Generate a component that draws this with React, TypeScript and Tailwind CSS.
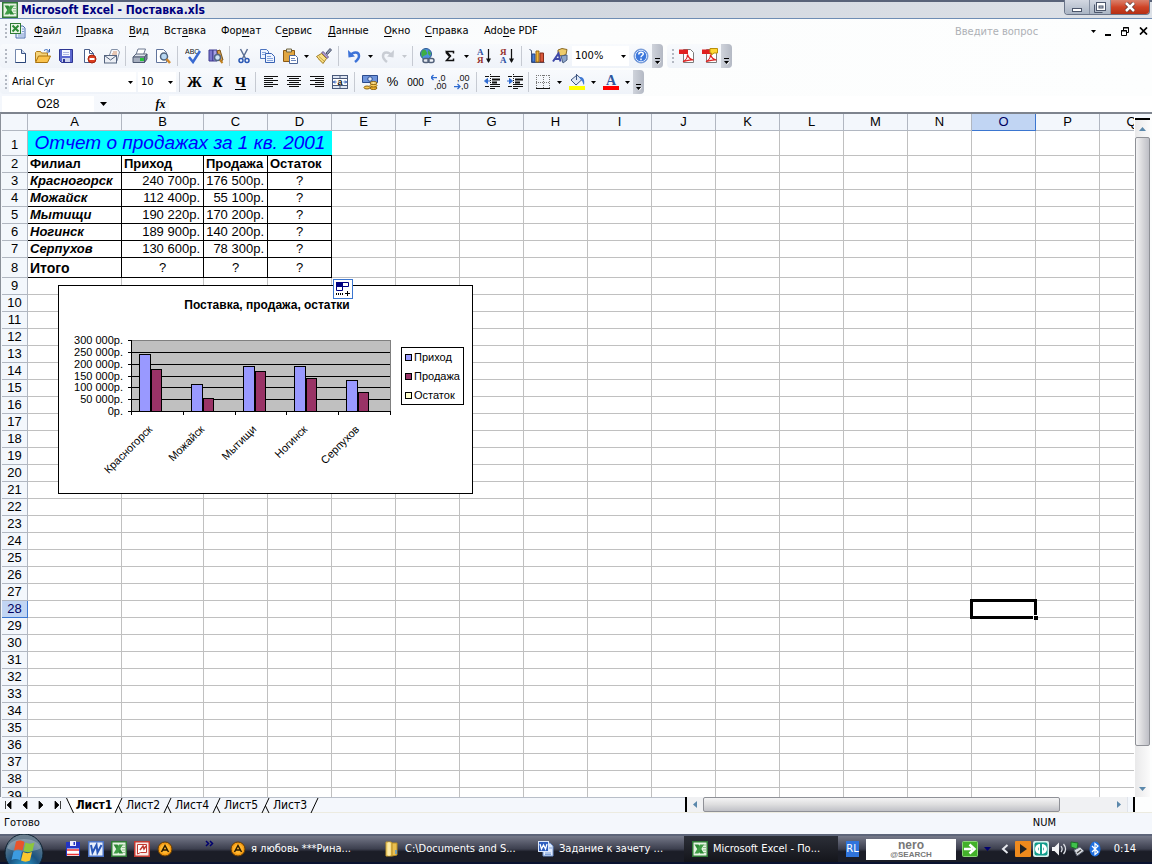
import type { ReactNode } from "react";

const UI = "font-['DejaVu_Sans_Condensed','DejaVu_Sans',sans-serif]";
const ARIAL = "font-['Liberation_Sans',Arial,sans-serif]";

function Icon({ children, size = 16 }: { children: ReactNode; size?: number }) {
  return (
    <svg width={size} height={size} viewBox="0 0 16 16" fill="none" aria-hidden="true" className="shrink-0">
      {children}
    </svg>
  );
}

/* ---------- icons ---------- */

const ExcelIcon = ({ size = 16 }: { size?: number }) => (
  <Icon size={size}>
    <rect x=".75" y=".75" width="14.5" height="14.5" fill="#e6f3e2" stroke="#2f7a36" strokeWidth="1.5" />
    <path d="M11 4h3M11 6.500h3M11 9h3M11 11.500h3" stroke="#8fc08b" />
    <path d="M2.500 3.500h4l5.500 9h-4z" fill="#2c8a35" />
    <path d="M8 3.500h4l-5.500 9h-4z" fill="#3f9c45" />
  </Icon>
);

const WordIcon = () => (
  <Icon>
    <rect x=".75" y=".75" width="14.5" height="14.5" fill="#e9f0fc" stroke="#4a72c4" strokeWidth="1.5" />
    <path d="M3 4l1.500 7.500L8.500 4l1 7.500L13.500 4" stroke="#2855b5" strokeWidth="2" />
  </Icon>
);

const PptIcon = () => (
  <Icon>
    <rect x=".75" y=".75" width="14.5" height="14.5" fill="#fbe9e6" stroke="#c23a32" strokeWidth="1.5" />
    <path d="M3.500 3.500h9v8h-6l-3 1.500z" fill="#fff" stroke="#c23a32" />
    <path d="M6 9l3-4 1 3 2-3" stroke="#c23a32" strokeWidth="1.5" />
  </Icon>
);

const AmpIcon = () => (
  <Icon>
    <circle cx="8" cy="8" r="7" fill="#f59a12" stroke="#5e3a05" />
    <circle cx="8" cy="8" r="5" fill="#ffb62e" />
    <path d="M4.500 11L8 4.500l3.500 6.500M6 9h4" stroke="#2a1a00" strokeWidth="1.5" />
  </Icon>
);

const WorkbookIcon = () => (
  <Icon>
    <path d="M6 3h7l2 2v10H6z" fill="#e8f0fb" stroke="#4d6fae" />
    <path d="M12 6h2M12 8.500h2M8 11h6M8 13h6" stroke="#7f9bd0" />
    <rect x=".5" y=".5" width="10" height="10" fill="#eaf6e7" stroke="#2f7a36" />
    <path d="M2.500 2.500l6 6M8.500 2.500l-6 6" stroke="#2c8a35" strokeWidth="2" />
  </Icon>
);

const NewIcon = () => (
  <Icon>
    <path d="M3.500 1.500h6l4 4v9h-10z" fill="#fff" stroke="#7488ad" />
    <path d="M9.500 1.500v4h4" fill="#cddaf0" stroke="#3d5687" />
    <path d="M13.500 5.500v9h-10" stroke="#2b4679" />
  </Icon>
);

const OpenIcon = () => (
  <Icon>
    <path d="M.5 13.500v-9l1-1h4l1 1.500h6v3" fill="#f6d47a" stroke="#b17c1b" />
    <path d="M.5 14.500l3-6.500h12l-3 6.500z" fill="#fbc34d" stroke="#a8720f" />
    <path d="M9 2.500c2-1.500 4-1 5 1M14.500 1v3h-3" stroke="#3463b5" />
  </Icon>
);

const SaveIcon = () => (
  <Icon>
    <path d="M1.500 1.500h13v13h-11l-2-2z" fill="#5b67cf" stroke="#2d3592" />
    <rect x="4" y="2" width="8" height="6" fill="#f4f6ff" />
    <path d="M5 4.500h6M5 6.500h6" stroke="#aeb6e2" />
    <path d="M4 10h8v4H4z" fill="#cdd3ee" />
    <path d="M5 11h2v3H5z" fill="#2d3592" />
  </Icon>
);

const PermissionIcon = () => (
  <Icon>
    <path d="M3.500 1.500h5l4 4v9h-9z" fill="#fff" stroke="#4a5f8c" />
    <path d="M8.500 1.500v4h4" stroke="#4a5f8c" />
    <circle cx="11" cy="11" r="4" fill="#dc3d1f" stroke="#a3230f" />
    <path d="M8.500 11h5" stroke="#fff" strokeWidth="2" />
  </Icon>
);

const MailIcon = () => (
  <Icon>
    <path d="M5.500 7l2-5.500h6l2 2.500-2.500 9z" fill="#f7f8fb" stroke="#8592a8" />
    <path d="M9 4h4M8 6h5" stroke="#d5926a" />
    <rect x=".5" y="7.500" width="12" height="7.500" fill="#eceff5" stroke="#55647f" />
    <path d="M.5 7.500l6 4.500 6-4.500" stroke="#55647f" />
  </Icon>
);

const PrintIcon = () => (
  <Icon>
    <path d="M4 6.500l2-5.500h7.500l-2 5.500z" fill="#fff" stroke="#6c7890" />
    <path d="M1 9l3-3h11l-2.500 3z" fill="#dde2ea" stroke="#5d687f" />
    <path d="M1 9h11.500v5.500H1z" fill="#a6afbf" stroke="#4d5870" />
    <path d="M12.500 9L15 6v5l-2.500 3.500z" fill="#78839a" stroke="#4d5870" />
    <path d="M8 11.500h4" stroke="#26c53a" strokeWidth="3" />
  </Icon>
);

const PreviewIcon = () => (
  <Icon>
    <path d="M1.500 1.500h7l3 3v10h-10z" fill="#fff" stroke="#60749c" />
    <circle cx="9" cy="8.5" r="3.5" fill="#b9d8f2" stroke="#51657f" strokeWidth="1.5" />
    <path d="M11.500 11l3.500 4" stroke="#d0882b" strokeWidth="2.5" />
  </Icon>
);

const SpellIcon = () => (
  <Icon>
    <text x="0" y="6" fontSize="7" fill="#111" fontFamily="Liberation Sans">ABC</text>
    <path d="M4 9l4 5 7-11" stroke="#3869d1" strokeWidth="2.5" />
  </Icon>
);

const ResearchIcon = () => (
  <Icon>
    <path d="M1 2h4v11H1z" fill="#7b76cc" stroke="#3f3a8e" />
    <path d="M5 2h4v11H5z" fill="#a9a4e5" stroke="#3f3a8e" />
    <path d="M9 3l3-1 3 10-3 1z" fill="#dca04c" stroke="#7a5317" />
    <circle cx="9.5" cy="9.5" r="3" fill="#cfe4f6" stroke="#526682" strokeWidth="1.5" />
    <path d="M12 12l2.500 3" stroke="#c0801f" strokeWidth="2" />
  </Icon>
);

const CutIcon = () => (
  <Icon>
    <path d="M4.500 1l5 9.500M11.500 1l-5 9.500" stroke="#5b6f94" strokeWidth="1.5" />
    <circle cx="5" cy="12.5" r="2" stroke="#2957b4" strokeWidth="1.5" />
    <circle cx="11" cy="12.5" r="2" stroke="#2957b4" strokeWidth="1.5" />
  </Icon>
);

const CopyIcon = () => (
  <Icon>
    <path d="M1.500 1.500h6l2 2v7h-8z" fill="#eef4ff" stroke="#4d74bf" />
    <path d="M3 4.500h4M3 6.500h4" stroke="#86a5dc" />
    <path d="M6.500 5.500h6l3 3v6h-9z" fill="#eef4ff" stroke="#3661b3" />
    <path d="M8 8.500h4M8 10.500h6M8 12.500h6" stroke="#86a5dc" />
  </Icon>
);

const PasteIcon = () => (
  <Icon>
    <path d="M1.500 2.500h11v11h-11z" fill="#e1a641" stroke="#8c5a14" />
    <path d="M4.500 1h5v3h-5z" fill="#e8e3d2" stroke="#6f6441" />
    <path d="M7.500 7.500h6l2 2v6h-8z" fill="#fff" stroke="#4d6697" />
    <path d="M9 10.500h4M9 12.500h5" stroke="#6c86bb" />
  </Icon>
);

const BrushIcon = () => (
  <Icon>
    <path d="M10 5l4-4.500 1.500 1.500-4 4.500z" fill="#8c96ae" stroke="#4d5670" />
    <path d="M7 3.500l5.500 5.500-1.500 1.500L5.500 5z" fill="#b8a4d4" stroke="#5d4c82" />
    <path d="M5.500 5.500L.5 8.500 7 15.500l3.500-5z" fill="#f7df86" stroke="#a07a22" />
    <path d="M3 8.500l5 4.500M2 10.500l4 3.500" stroke="#c9a23d" />
  </Icon>
);

const UndoIcon = ({ muted = false }: { muted?: boolean }) => (
  <Icon>
    <g transform={muted ? "matrix(-1 0 0 1 16 0)" : undefined}>
      <path
        d="M4.500 7.500c2.500-4 8.500-4 8.500.5 0 2.500-1.500 4-4 6"
        stroke={muted ? "#c9cdd4" : "#3d73d8"}
        strokeWidth="2.5"
      />
      <path d="M2 2l.5 7.500 6.500-1z" fill={muted ? "#c9cdd4" : "#3d73d8"} />
    </g>
  </Icon>
);

const LinkIcon = () => (
  <Icon>
    <circle cx="7" cy="6" r="5.5" fill="#4d8fdc" stroke="#2b5694" />
    <path d="M3 3c2-2 4-1 4 0s2 1 1 3-4 1-4 3-3-3-1-6zM9 2l3 3-1 3-2-2z" fill="#3fae46" />
    <rect x="4" y="10.5" width="6" height="4" rx="2" fill="#e5e9ef" stroke="#52617a" strokeWidth="1.5" />
    <rect x="9" y="10.5" width="6" height="4" rx="2" fill="none" stroke="#52617a" strokeWidth="1.5" />
  </Icon>
);

const SumIcon = () => (
  <Icon>
    <path d="M11.500 5.500V3.500h-7l4 4.500-4 4.500h7v-2" stroke="#111" strokeWidth="1.5" />
    <path d="M4 4l4 4.500" stroke="#111" strokeWidth="2" />
  </Icon>
);

const SortIcon = ({ down = true }: { down?: boolean }) => (
  <Icon>
    <text x="1" y="7" fontSize="9" fontWeight="bold" fill={down ? "#2d4fa0" : "#96302c"} fontFamily="Liberation Serif">
      {down ? "А" : "Я"}
    </text>
    <text x="1" y="15" fontSize="9" fontWeight="bold" fill={down ? "#96302c" : "#2d4fa0"} fontFamily="Liberation Serif">
      {down ? "Я" : "А"}
    </text>
    <path d="M12.500 1v13" stroke="#111" strokeWidth="1.25" />
    <path d="M10 10.500h5L12.500 15z" fill="#111" />
  </Icon>
);

const ChartIcon = () => (
  <Icon>
    <path d="M.5 1.500l2 1v12h13" stroke="#4a5878" />
    <path d="M3 6h3v8H3z" fill="#4b7fd6" stroke="#23468e" />
    <path d="M7 3h3v11H7z" fill="#f3b53a" stroke="#916514" />
    <path d="M11 5h3.500v9H11z" fill="#d9583b" stroke="#852c1a" />
  </Icon>
);

const DrawingIcon = () => (
  <Icon>
    <path d="M6 2l4-1.500 5 1-1 5-4 1.500-4-1z" fill="#eecb6a" stroke="#8b6a24" />
    <path d="M9 8l6-1v5l-4 3z" fill="#8fa6c9" stroke="#4a5f83" />
    <path d="M1 13.500L6.500 5.500l2 8M3 11h5.500" stroke="#3f49a8" strokeWidth="2" />
  </Icon>
);

const HelpIcon = () => (
  <Icon>
    <circle cx="8" cy="8" r="7" fill="#3d78dc" stroke="#7f9fd4" />
    <circle cx="8" cy="8" r="5.75" stroke="#d9e6fb" />
    <path d="M5.750 6.500c0-3 4.500-3 4.500-.5 0 1.500-2.250 1.500-2.250 3.250M8 10.500v1.750" stroke="#fff" strokeWidth="1.5" />
  </Icon>
);

const PdfIcon = ({ comment = false }: { comment?: boolean }) => (
  <Icon>
    <path d="M4.500 1.500h7l3 3v10h-10z" fill="#fff" stroke="#7c7c7c" />
    <path d="M0 1.500h9v4.500H0z" fill="#e02020" />
    <path d="M4 13.500c3-1 4.500-4.500 4.500-7 1 3.500 3 5 6 5.500-4-.5-7 .5-10 1.500z" stroke="#d22" strokeWidth="1.25" />
    {comment && <path d="M8 .5h7.500v4.500H12l-2.500 2V5H8z" fill="#ffd633" stroke="#b98f0c" />}
  </Icon>
);

const Letter = ({ ch, className }: { ch: string; className: string }) => (
  <span className={`font-['Liberation_Serif',serif] text-[15px] leading-4 font-bold ${className}`}>{ch}</span>
);

const AlignIcon = ({ d }: { d: string }) => (
  <Icon>
    <path d={d} stroke="#111" />
  </Icon>
);

const MergeIcon = () => (
  <Icon>
    <rect x=".5" y="1.5" width="15" height="13" fill="#dfe7f4" stroke="#49597a" />
    <path d="M.5 4.500h15M.5 11.500h15M8 1.500v3M8 11.500v3" stroke="#49597a" />
    <path d="M1 5h14v6H1z" fill="#fff" />
    <path d="M1 8h3.500M11.500 8h3.500M3 6.500L1.500 8 3 9.500M13 6.500L14.500 8 13 9.500" stroke="#2b59b5" />
    <text x="5.5" y="10.5" fontSize="9" fontWeight="bold" fill="#111" fontFamily="Liberation Sans">a</text>
  </Icon>
);

const CurrencyIcon = () => (
  <Icon>
    <path d="M.5 1.500h15v7H.5z" fill="#6e94dc" stroke="#2b4b8e" />
    <circle cx="8" cy="5" r="2.25" fill="#dfe9fb" stroke="#2b4b8e" />
    <ellipse cx="11.5" cy="14" rx="3.5" ry="1.5" fill="#f3b22b" stroke="#8d6411" />
    <ellipse cx="11.5" cy="11.5" rx="3.5" ry="1.5" fill="#fbca52" stroke="#8d6411" />
    <ellipse cx="11.5" cy="9" rx="3.5" ry="1.5" fill="#ffe08a" stroke="#8d6411" />
    <ellipse cx="5" cy="13.5" rx="3" ry="1.5" fill="#fbca52" stroke="#8d6411" />
  </Icon>
);

const DecimalIcon = ({ more = true }: { more?: boolean }) => (
  <Icon>
    <text x={more ? 7 : 3} y="7" fontSize="9" fill="#111" fontFamily="Liberation Sans">{more ? ",0" : ",00"}</text>
    <text x={more ? 3 : 7} y="15" fontSize="9" fill="#111" fontFamily="Liberation Sans">{more ? ",00" : ",0"}</text>
    <path
      d={more ? "M0 3.500h6M2.500 1L0 3.500 2.500 6" : "M0 12.500h6M3.500 10L6 12.500 3.500 15"}
      stroke="#2f6bd0"
      strokeWidth="1.25"
    />
  </Icon>
);

const IndentIcon = ({ out = false }: { out?: boolean }) => (
  <Icon>
    <path d="M1 2.500h4M7 2.500h9M7 12.500h9M1 12.500h4" stroke="#111" />
    <path d="M8 5.500h8M8 8.500h5" stroke="#111" strokeWidth="2" />
    <path d="M7 10.500h9M7 14.500h4" stroke="#111" />
    <path d="M6.500 0v16" stroke="#111" strokeDasharray="1 1" />
    <path d={out ? "M3.500 4.500L.5 7l3 2.500zM3 7h3" : "M2.500 4.500L5.500 7l-3 2.500zM0 7h3"} fill="#2f6bd0" stroke="#2f6bd0" />
  </Icon>
);

const BordersIcon = () => (
  <Icon>
    <path d="M1.500 1v13M8.500 1v13M14.500 1v13M1 1.500h14M1 8.500h14" stroke="#777" strokeDasharray="1 1" />
    <path d="M1 14.500h14" stroke="#111" />
  </Icon>
);

const FillIcon = () => (
  <Icon>
    <path d="M2 6l6-5 5 4.500-6 5.500z" fill="#dfe8f6" stroke="#3c5480" />
    <path d="M7.500 0v6" stroke="#3c5480" />
    <path d="M10 3c4-.5 6 2 5 8-1.500-1.500-1-4-3-5z" fill="#3f78d3" />
    <path d="M0 14h16" stroke="#ffff00" strokeWidth="4" />
  </Icon>
);

const FontColorIcon = () => (
  <Icon>
    <text x="3" y="11" fontSize="14" fontWeight="bold" fill="#2f569f" fontFamily="Liberation Serif">A</text>
    <path d="M0 14h16" stroke="#ff0000" strokeWidth="4" />
  </Icon>
);

const FolderIcon = () => (
  <Icon>
    <path d="M2 1h5l1 1v13H2z" fill="#f9e08a" stroke="#c49a2c" />
    <path d="M8 2h5v12l-5 1z" fill="#e9bf4f" stroke="#b98e22" />
    <path d="M5 1v14" stroke="#fff4c4" />
    <path d="M12 9v4" stroke="#4f96d8" strokeWidth="1.5" />
  </Icon>
);

const WordDocIcon = () => (
  <Icon>
    <path d="M5 2h7l3 3v10H5z" fill="#dfeafb" stroke="#6f93cf" />
    <path d="M7 12h6M7 13.500h6M11 7h3" stroke="#7fa0d8" />
    <rect x=".5" y=".5" width="10" height="10" fill="#2f5fbf" stroke="#dbe7fb" />
    <path d="M2 3l1.500 5L5.500 4l2 4L9 3" stroke="#fff" strokeWidth="1.25" />
  </Icon>
);

const FloppyIcon = () => (
  <Icon>
    <path d="M1 1h14v14H1z" fill="#2435c4" />
    <path d="M5 0h6v5H5z" fill="#eef" />
    <path d="M8.500 1h1.500v3H8.500z" fill="#2435c4" />
    <path d="M2 7.500h12V15H2z" fill="#fff" />
    <path d="M2 9h12M2 13.500h12" stroke="#e33" strokeWidth="1.5" />
  </Icon>
);

/* ---------- small controls ---------- */

const Caret = ({ color = "#000" }: { color?: string }) => (
  <svg width="5" height="3" viewBox="0 0 5 3" aria-hidden="true" className="shrink-0">
    <path d="M0 0h5L2.500 3z" fill={color} />
  </svg>
);

function Tool({ label, children }: { label: string; children: ReactNode }) {
  return (
    <button type="button" aria-label={label} className="flex h-6 w-[23px] shrink-0 items-center justify-center">
      {children}
    </button>
  );
}

function DropArrow({ label, color }: { label: string; color?: string }) {
  return (
    <button type="button" aria-label={label} className="flex h-6 w-[11px] shrink-0 items-center justify-center">
      <Caret color={color} />
    </button>
  );
}

const Sep = () => <div className="mx-[3px] h-5 w-px shrink-0 bg-[#c6cad2]" />;
const SepThin = () => <div className="mx-[2px] h-5 w-px shrink-0 bg-[#c6cad2]" />;

const Handle = () => (
  <svg width="8" height="18" viewBox="0 0 8 18" aria-hidden="true" className="shrink-0">
    <path d="M6 2v14" stroke="#b3b8c2" strokeWidth="2" strokeDasharray="2 2" />
  </svg>
);

function ToolbarEnd({ label }: { label: string }) {
  return (
    <button
      type="button"
      aria-label={label}
      className="flex h-6 w-[11px] shrink-0 items-end justify-center rounded-r bg-gradient-to-r from-[#cfd3db] to-[#b4b9c4] pb-[3px]"
    >
      <svg width="7" height="7" viewBox="0 0 7 7" aria-hidden="true">
        <path d="M1 .5h5" stroke="#000" />
        <path d="M1 3h5L3.500 6z" fill="#000" />
        <path d="M6.500 3.500l-2.500 3" stroke="#fff" />
      </svg>
    </button>
  );
}

function Combo({ label, value, className }: { label: string; value: string; className: string }) {
  return (
    <div className={`flex h-5 shrink-0 items-center bg-white pr-[3px] ${className}`}>
      <select
        aria-label={label}
        defaultValue={value}
        className="min-w-0 flex-1 appearance-none bg-transparent pl-[3px] text-[11px] outline-none"
      >
        <option>{value}</option>
      </select>
      <Caret />
    </div>
  );
}

/* ---------- title, menu, toolbars ---------- */

function TitleBar() {
  return (
    <header className="flex h-[19px] shrink-0 items-center border-t-2 border-b border-t-[#596379] border-b-[#6f8db4] bg-gradient-to-r from-[#eef0f4] via-[#d3d8e0] to-[#dde1e7] pl-[2px]">
      <ExcelIcon />
      <h1 className="ml-[3px] text-xs leading-4 font-bold text-[#000080]">Microsoft Excel - Поставка.xls</h1>
      <div className="-mt-[2px] mr-[2px] ml-auto flex h-[15px] self-start overflow-hidden rounded-b border border-t-0 border-[#6a7488]">
        <button type="button" aria-label="Свернуть" className="flex w-6 items-center justify-center bg-gradient-to-b from-[#d3d8e2] to-[#aab5c4]">
          <svg width="12" height="12" viewBox="0 0 12 12">
            <rect x="1.5" y="7.5" width="9" height="3" fill="#fff" stroke="#4c566b" />
          </svg>
        </button>
        <button type="button" aria-label="Развернуть" className="flex w-[22px] items-center justify-center border-x border-[#8791a3] bg-gradient-to-b from-[#d3d8e2] to-[#aab5c4]">
          <svg width="12" height="12" viewBox="0 0 12 12">
            <path d="M.5 3.500v8h8" fill="none" stroke="#4c566b" />
            <rect x="2.5" y="1.5" width="9" height="8" fill="#fff" stroke="#4c566b" />
            <rect x="5" y="5" width="4" height="2" fill="#c6ccd6" stroke="#4c566b" />
          </svg>
        </button>
        <button type="button" aria-label="Закрыть" className="flex w-[38px] items-center justify-center bg-gradient-to-b from-[#d9806b] via-[#cf4426] to-[#b52f14]">
          <svg width="12" height="10" viewBox="0 0 12 10">
            <path d="M2 1l8 8M10 1L2 9" stroke="#5a3733" strokeWidth="4" />
            <path d="M2 1l8 8M10 1L2 9" stroke="#fff" strokeWidth="2.5" />
          </svg>
        </button>
      </div>
    </header>
  );
}

const menus: [string, string, string, string][] = [
  ["", "Ф", "айл", "w-[42px]"],
  ["", "П", "равка", "w-[53px]"],
  ["", "В", "ид", "w-[35px]"],
  ["Вст", "а", "вка", "w-[57px]"],
  ["Фор", "м", "ат", "w-[54px]"],
  ["С", "е", "рвис", "w-[53px]"],
  ["", "Д", "анные", "w-[56px]"],
  ["", "О", "кно", "w-[41px]"],
  ["", "С", "правка", "w-[59px]"],
  ["Ado", "b", "e PDF", "w-[60px]"],
];

function MenuBar() {
  return (
    <nav aria-label="Меню" className="flex h-6 shrink-0 items-center">
      <Handle />
      <span className="ml-[2px]">
        <WorkbookIcon />
      </span>
      <ul className="ml-2 flex text-[11px] leading-4">
        {menus.map(([a, u, b, w]) => (
          <li key={a + u + b} className={w}>
            <button type="button" className="whitespace-nowrap">
              {a}
              <span className="underline underline-offset-2">{u}</span>
              {b}
            </button>
          </li>
        ))}
      </ul>
      <input
        aria-label="Введите вопрос"
        placeholder="Введите вопрос"
        className="ml-auto h-5 w-[136px] bg-transparent text-[11px] outline-none placeholder:text-[#adb0b5]"
      />
      <Caret />
      <div className="mr-1 ml-2 flex items-center gap-2">
        <button type="button" aria-label="Свернуть окно">
          <svg width="9" height="9" viewBox="0 0 9 9">
            <path d="M1 8h6" stroke="#000" strokeWidth="2" />
          </svg>
        </button>
        <button type="button" aria-label="Восстановить окно">
          <svg width="8" height="9" viewBox="0 0 8 9">
            <path d="M2.500 3V.5h5v5H6M2 1h6M.5 3.500h5v5h-5zM0 4h6" fill="none" stroke="#000" />
          </svg>
        </button>
        <button type="button" aria-label="Закрыть окно" className="ml-[2px]">
          <svg width="9" height="8" viewBox="0 0 9 8">
            <path d="M1 .5l7 7M8 .5l-7 7" stroke="#000" strokeWidth="1.75" />
          </svg>
        </button>
      </div>
    </nav>
  );
}

const bar = "flex h-6 shrink-0 items-center rounded bg-gradient-to-b from-[#f8fafd] to-[#eff3f9]";

function StandardToolbar() {
  return (
    <div className="flex h-[26px] shrink-0 items-center gap-1">
      <div role="toolbar" aria-label="Стандартная" className={bar}>
        <Handle />
        <Tool label="Создать"><NewIcon /></Tool>
        <Tool label="Открыть"><OpenIcon /></Tool>
        <Tool label="Сохранить"><SaveIcon /></Tool>
        <Tool label="Разрешения"><PermissionIcon /></Tool>
        <Tool label="Почта"><MailIcon /></Tool>
        <SepThin />
        <Tool label="Печать"><PrintIcon /></Tool>
        <Tool label="Просмотр"><PreviewIcon /></Tool>
        <Sep />
        <Tool label="Орфография"><SpellIcon /></Tool>
        <Tool label="Справочники"><ResearchIcon /></Tool>
        <SepThin />
        <Tool label="Вырезать"><CutIcon /></Tool>
        <Tool label="Копировать"><CopyIcon /></Tool>
        <Tool label="Вставить"><PasteIcon /></Tool>
        <DropArrow label="Варианты вставки" />
        <Tool label="Формат по образцу"><BrushIcon /></Tool>
        <Sep />
        <Tool label="Отменить"><UndoIcon /></Tool>
        <DropArrow label="Список отмены" />
        <Tool label="Вернуть"><UndoIcon muted /></Tool>
        <DropArrow label="Список возврата" color="#c4c8ce" />
        <SepThin />
        <Tool label="Гиперссылка"><LinkIcon /></Tool>
        <Tool label="Автосумма"><SumIcon /></Tool>
        <DropArrow label="Функции" />
        <Tool label="По возрастанию"><SortIcon /></Tool>
        <Tool label="По убыванию"><SortIcon down={false} /></Tool>
        <Sep />
        <Tool label="Диаграмма"><ChartIcon /></Tool>
        <Tool label="Рисование"><DrawingIcon /></Tool>
        <Combo label="Масштаб" value="100%" className="ml-px w-[57px]" />
        <Tool label="Справка"><HelpIcon /></Tool>
        <ToolbarEnd label="Параметры стандартной панели" />
      </div>
      <div role="toolbar" aria-label="PDF" className={bar}>
        <Handle />
        <Tool label="Преобразовать в PDF"><PdfIcon /></Tool>
        <Tool label="PDF с рецензированием"><PdfIcon comment /></Tool>
        <ToolbarEnd label="Параметры панели PDF" />
      </div>
    </div>
  );
}

function FormatToolbar() {
  return (
    <div className="flex h-[26px] shrink-0 items-center">
      <div role="toolbar" aria-label="Форматирование" className={bar}>
        <Handle />
        <Combo label="Шрифт" value="Arial Cyr" className="ml-px w-[127px]" />
        <Combo label="Размер" value="10" className="ml-[2px] w-[38px]" />
        <Sep />
        <Tool label="Полужирный"><Letter ch="Ж" className="" /></Tool>
        <Tool label="Курсив"><Letter ch="К" className="italic" /></Tool>
        <Tool label="Подчеркнутый"><Letter ch="Ч" className="underline underline-offset-2" /></Tool>
        <Sep />
        <Tool label="По левому краю"><AlignIcon d="M1 2.500h14M1 4.500h9M1 6.500h14M1 8.500h9M1 10.500h14M1 12.500h9" /></Tool>
        <Tool label="По центру"><AlignIcon d="M1 2.500h14M3 4.500h10M1 6.500h14M3 8.500h10M1 10.500h14M3 12.500h10" /></Tool>
        <Tool label="По правому краю"><AlignIcon d="M1 2.500h14M6 4.500h9M1 6.500h14M6 8.500h9M1 10.500h14M6 12.500h9" /></Tool>
        <Tool label="Объединить"><MergeIcon /></Tool>
        <Sep />
        <Tool label="Денежный формат"><CurrencyIcon /></Tool>
        <Tool label="Процентный формат"><span className={`${ARIAL} text-[13px]`}>%</span></Tool>
        <Tool label="Формат с разделителями"><span className={`${ARIAL} text-[10px]`}>000</span></Tool>
        <Tool label="Увеличить разрядность"><DecimalIcon /></Tool>
        <Tool label="Уменьшить разрядность"><DecimalIcon more={false} /></Tool>
        <Sep />
        <Tool label="Уменьшить отступ"><IndentIcon out /></Tool>
        <Tool label="Увеличить отступ"><IndentIcon /></Tool>
        <SepThin />
        <Tool label="Границы"><BordersIcon /></Tool>
        <DropArrow label="Виды границ" />
        <Tool label="Цвет заливки"><FillIcon /></Tool>
        <DropArrow label="Цвета заливки" />
        <Tool label="Цвет шрифта"><FontColorIcon /></Tool>
        <DropArrow label="Цвета шрифта" />
        <ToolbarEnd label="Параметры панели форматирования" />
      </div>
    </div>
  );
}

function FormulaBar() {
  return (
    <div className="flex h-[17px] shrink-0 items-center pl-[2px]">
      <input
        aria-label="Имя"
        defaultValue="O28"
        className={`${ARIAL} h-4 w-[92px] bg-white text-center text-xs outline-none`}
      />
      <button type="button" aria-label="Список имён" className="flex h-4 w-[18px] items-center justify-center">
        <svg width="7" height="4" viewBox="0 0 7 4">
          <path d="M0 0h7L3.500 4z" />
        </svg>
      </button>
      <button type="button" aria-label="Вставка функции" className="ml-10 w-[17px] text-center font-['Liberation_Serif',serif] text-xs leading-4 font-bold italic">
        fx
      </button>
      <input aria-label="Строка формул" className="h-4 flex-1 bg-white text-xs outline-none" />
    </div>
  );
}

/* ---------- sheet ---------- */

const columns = "ABCDEFGHIJKLMNOPQ".split("");
const rowNumbers = Array.from({ length: 39 }, (_, i) => i + 1);

const report: Record<number, string[]> = {
  2: ["Филиал", "Приход", "Продажа", "Остаток"],
  3: ["Красногорск", "240 700р.", "176 500р.", "?"],
  4: ["Можайск", "112 400р.", "55 100р.", "?"],
  5: ["Мытищи", "190 220р.", "170 200р.", "?"],
  6: ["Ногинск", "189 900р.", "140 200р.", "?"],
  7: ["Серпухов", "130 600р.", "78 300р.", "?"],
  8: ["Итого", "?", "?", "?"],
};

function cellStyle(row: number, col: number) {
  if (row === 2) return "px-[2px] text-left font-bold";
  if (col === 0) return row === 8 ? "px-[2px] text-left text-sm/4 font-bold" : "px-[2px] text-left font-bold italic";
  if (row === 8 || col === 3) return "px-[2px] text-center";
  return "pr-[3px] text-right";
}

function rowHeight(row: number) {
  if (row === 1) return "h-[25px]";
  if (row === 8) return "h-5";
  return "h-[17px]";
}

function SheetTable() {
  return (
    <table className={`${ARIAL} w-[1162px] table-fixed border-separate border-spacing-0 text-[13px] leading-4`}>
      <colgroup>
        <col className="w-[26px]" />
        <col className="w-[94px]" />
        <col className="w-[82px]" />
        {columns.slice(2).map((c) => (
          <col key={c} className="w-16" />
        ))}
      </colgroup>
      <thead>
        <tr>
          <th className="h-[17px] border-r border-b border-[#b1b7c1] bg-[#f3f7fc] p-0" />
          {columns.map((c) => (
            <th
              key={c}
              scope="col"
              className={`h-[17px] border-r border-b p-0 font-normal ${
                c === "O" ? "border-[#3b76d0] bg-[#c1d5f3] text-[#000060]" : "border-[#b1b7c1] bg-[#f3f7fc]"
              }`}
            >
              {c}
            </th>
          ))}
        </tr>
      </thead>
      <tbody>
        {rowNumbers.map((r) => (
          <tr key={r}>
            <th
              scope="row"
              className={`${rowHeight(r)} border-r border-b p-0 font-normal ${r === 1 ? "pt-1" : ""} ${
                r === 28 ? "border-[#3b76d0] bg-[#c1d5f3] text-[#000060]" : "border-[#b1b7c1] bg-[#f3f7fc]"
              }`}
            >
              {r}
            </th>
            {r === 1 && (
              <td
                colSpan={4}
                className="border-b border-black bg-[#00ffff] p-0 text-center text-[19px] leading-6 whitespace-nowrap text-[#0000ff] italic"
              >
                Отчет о продажах за 1 кв. 2001
              </td>
            )}
            {columns.slice(r === 1 ? 4 : 0).map((c, i) => {
              const values = report[r];
              if (values && i < 4) {
                return (
                  <td key={c} className={`border-r border-b border-black py-0 whitespace-nowrap ${cellStyle(r, i)}`}>
                    {values[i]}
                  </td>
                );
              }
              const active = r === 28 && c === "O";
              return (
                <td key={c} className={`border-r border-b border-[#c0c0c0] p-0 ${active ? "relative" : ""}`}>
                  {active && (
                    <span className="absolute -inset-[2px] border-[3px] border-black">
                      <span className="absolute -right-1 -bottom-1 size-[5px] border-t border-l border-white bg-black" />
                    </span>
                  )}
                </td>
              );
            })}
          </tr>
        ))}
      </tbody>
    </table>
  );
}

const axis: [string, number][] = [
  ["300 000р.", 55],
  ["250 000р.", 67],
  ["200 000р.", 79],
  ["150 000р.", 91],
  ["100 000р.", 102],
  ["50 000р.", 114],
  ["0р.", 126],
];

const bars: [string, number, number, number][] = [
  ["Красногорск", 81, 69, 84],
  ["Можайск", 133, 99, 113],
  ["Мытищи", 185, 81, 86],
  ["Ногинск", 236, 81, 93],
  ["Серпухов", 288, 95, 107],
];

const legend: [string, string, number][] = [
  ["Приход", "#9999ff", 69],
  ["Продажа", "#993366", 88],
  ["Остаток", "#ffffcc", 107],
];

function SalesChart() {
  return (
    <svg width="415" height="209" viewBox="0 0 415 209" fontFamily="Liberation Sans, Arial, sans-serif" fontSize="11">
      <rect x=".5" y=".5" width="414" height="208" fill="#fff" stroke="#000" />
      <text x="209" y="24" textAnchor="middle" fontSize="12" fontWeight="bold">
        Поставка, продажа, остатки
      </text>
      <rect x="73.5" y="55.5" width="259" height="71" fill="#c0c0c0" stroke="#808080" />
      {axis.map(([t, y]) => (
        <g key={t}>
          {y > 55 && <path d={`M73 ${y + 0.5}h259`} stroke="#000" />}
          <path d={`M70 ${y + 0.5}h4`} stroke="#000" />
          <text x="65" y={y + 4} textAnchor="end">
            {t}
          </text>
        </g>
      ))}
      <path d="M73.500 55v75M125.500 126v4M177.500 126v4M228.500 126v4M280.500 126v4M332.500 126v4" stroke="#000" />
      {bars.map(([name, x, y1, y2]) => (
        <g key={name}>
          <rect x={x + 0.5} y={y1 + 0.5} width="11" height={126 - y1} fill="#9999ff" stroke="#000" />
          <rect x={x + 12.5} y={y2 + 0.5} width="10" height={126 - y2} fill="#993366" stroke="#000" />
          <text transform={`translate(${x + 14} 145) rotate(-45)`} textAnchor="end">
            {name}
          </text>
        </g>
      ))}
      <rect x="343.5" y="62.5" width="62" height="57" fill="#fff" stroke="#000" />
      {legend.map(([name, color, y]) => (
        <g key={name}>
          <rect x="347.5" y={y + 0.5} width="6" height="6" fill={color} stroke="#000" />
          <text x="356" y={y + 7}>
            {name}
          </text>
        </g>
      ))}
    </svg>
  );
}

function Sheet() {
  return (
    <main className="flex min-h-0 flex-1 overflow-hidden border-t-2 border-l border-t-[#7e848e] border-l-[#8a9099] pl-px">
      <div className="relative min-w-0 flex-1 overflow-hidden bg-white">
        <SheetTable />
        <div className="absolute top-[171px] left-[56px]">
          <SalesChart />
        </div>
        <button
          type="button"
          aria-label="Параметры автозаполнения"
          className="absolute top-[165px] left-[331px] flex size-5 items-center justify-center border border-[#3b76d0] bg-white"
        >
          <svg width="16" height="16" viewBox="0 0 16 16" fill="none">
            <rect x="1.5" y="1.5" width="6" height="4" fill="#000080" stroke="#000080" />
            <path d="M7.500 1.500h6v4h-6M1.500 5.500h6v4h-6z" stroke="#000080" />
            <path d="M1 13h7" stroke="#000" strokeWidth="2" strokeDasharray="1 1" />
            <path d="M10 12.500h5M12.500 10v5" stroke="#000" />
          </svg>
        </button>
      </div>
      <div className="mr-[2px] flex w-4 shrink-0 flex-col border-l border-white bg-gradient-to-r from-[#e9e9ea] to-[#fbfbfb]">
        <div className="h-[6px] border-b-2 border-black bg-[#f3f7fc]" />
        <button type="button" aria-label="Вверх" className="flex h-[17px] items-center justify-center">
          <svg width="7" height="4" viewBox="0 0 7 4">
            <path d="M0 4h7L3.500 0z" fill="#5b88ab" />
          </svg>
        </button>
        <div className="min-h-0 flex-[611] rounded-xs border border-[#8f9197] bg-gradient-to-r from-[#f4f4f5] via-[#d8d8db] to-[#bebfc6]" />
        <div className="min-h-0 flex-[35]" />
        <button type="button" aria-label="Вниз" className="flex h-4 items-center justify-center">
          <svg width="7" height="4" viewBox="0 0 7 4">
            <path d="M0 0h7L3.500 4z" fill="#5b88ab" />
          </svg>
        </button>
      </div>
    </main>
  );
}

const navButtons: [string, string][] = [
  ["Первый лист", "M1.500 0v8M7 0v8L3 4z"],
  ["Предыдущий лист", "M6 0v8L2 4z"],
  ["Следующий лист", "M2 0v8l4-4z"],
  ["Последний лист", "M6.500 0v8M1 0v8l4-4z"],
];

function SheetTabs() {
  return (
    <div className="flex h-4 shrink-0 border-b border-[#ecebe0] pl-[2px]">
      <div className="flex min-w-0 flex-[685] border-t border-[#b8bec8] bg-[#f4f7fc]">
        <div className="flex w-16 shrink-0 items-center justify-between pr-1 pl-[2px]">
          {navButtons.map(([label, d]) => (
            <button key={label} type="button" aria-label={label}>
              <svg width="8" height="8" viewBox="0 0 8 8">
                <path d={d} stroke="#000" strokeWidth=".75" />
              </svg>
            </button>
          ))}
        </div>
        <svg width="8" height="15" viewBox="0 0 8 15" className="shrink-0">
          <path d="M0 0h8v15H7z" fill="#fff" />
          <path d="M.5 0l7 15" stroke="#000" />
        </svg>
        {["Лист1", "Лист2", "Лист4", "Лист5", "Лист3"].map((name, i) => (
          <div key={name} className="flex shrink-0">
            <button
              type="button"
              className={`w-10 text-center text-xs leading-[15px] ${i === 0 ? "bg-white font-bold" : ""}`}
            >
              {name}
            </button>
            <svg width="9" height="15" viewBox="0 0 9 15">
              {i === 0 && <path d="M0 0h8L1 15H0z" fill="#fff" />}
              <path d={i < 4 ? "M8 0L1 15M4.500 8L8 15" : "M8 0L1 15"} stroke="#000" fill="none" />
            </svg>
          </div>
        ))}
      </div>
      <div className="flex flex-[448] border-x-2 border-black bg-[#f0f1f3]">
        <button type="button" aria-label="Влево" className="flex w-4 items-center justify-center">
          <svg width="4" height="7" viewBox="0 0 4 7">
            <path d="M4 0v7L0 3.500z" fill="#5b88ab" />
          </svg>
        </button>
        <div className="flex-[356] rounded-xs border border-[#8f9197] bg-gradient-to-b from-[#f4f4f5] via-[#dededf] to-[#c0c1c7]" />
        <div className="flex-[51]" />
        <button type="button" aria-label="Вправо" className="flex w-4 items-center justify-center">
          <svg width="4" height="7" viewBox="0 0 4 7">
            <path d="M0 0v7l4-3.500z" fill="#5b88ab" />
          </svg>
        </button>
        <div className="w-[6px] border-l border-[#dfe3ea] bg-[#f3f7fc]" />
      </div>
      <div className="w-[17px]" />
    </div>
  );
}

/* ---------- taskbar ---------- */

function StartOrb() {
  return (
    <svg width="40" height="30" viewBox="0 0 40 30" aria-hidden="true">
      <defs>
        <radialGradient id="orb" cx="50%" cy="90%" r="80%">
          <stop offset="0" stopColor="#2fa9dc" />
          <stop offset=".5" stopColor="#1a5380" />
          <stop offset="1" stopColor="#6b8090" />
        </radialGradient>
      </defs>
      <circle cx="20" cy="19" r="19" fill="url(#orb)" stroke="#0c2030" />
      <path d="M3 14C7 2 33 2 37 14c-8 5-26 5-34 0z" fill="#fff" opacity=".25" />
      <path d="M12 7.500c3-1.500 6-1 8.500.5l-2 8.500c-3-1.500-6-1.500-8.500 0z" fill="#e8542b" />
      <path d="M21.500 8.500c3 1.500 6 1.500 9 0l-2 8.500c-3 1.500-6 1.500-9 0z" fill="#8cc63c" />
      <path d="M9.500 17.500c3-1.500 6-1.500 8.500 0l-2 8.500c-3-1.500-6-1.500-8.500 0z" fill="#3c9be0" />
      <path d="M19 18c3 1.500 6 1.500 9 0l-2 8.500c-3 1.500-6 1.500-9 0z" fill="#fbc72d" />
    </svg>
  );
}

const tasks: { text: string; icon: ReactNode; active?: boolean }[] = [
  { text: "я любовь ***Рина...", icon: <AmpIcon /> },
  { text: "C:\\Documents and S...", icon: <FolderIcon /> },
  { text: "Задание к зачету ...", icon: <WordDocIcon /> },
  { text: "Microsoft Excel - По...", icon: <ExcelIcon />, active: true },
];

const quickLaunch: [string, ReactNode][] = [
  ["Дискета", <FloppyIcon />],
  ["Word", <WordIcon />],
  ["Excel", <ExcelIcon />],
  ["PowerPoint", <PptIcon />],
  ["Проигрыватель", <AmpIcon />],
];

function Taskbar() {
  return (
    <footer className="flex h-[30px] shrink-0 items-center border-t-2 border-b-2 border-t-[#5d6579] border-b-[#0a1230] bg-gradient-to-b from-[#767a8a] from-0% via-[#3c3f4e] via-50% to-[#1b1d27] to-60% text-white">
      <button type="button" aria-label="Пуск" className="-my-[2px] ml-1 shrink-0">
        <StartOrb />
      </button>
      <div className="ml-[21px] flex shrink-0 gap-[7px]">
        {quickLaunch.map(([label, icon]) => (
          <button key={label} type="button" aria-label={label}>
            {icon}
          </button>
        ))}
      </div>
      <button type="button" aria-label="Ещё" className="ml-8 w-3 shrink-0 self-start">
        <svg width="9" height="14" viewBox="0 0 9 14">
          <path d="M1 5l2.500 2.500L1 10M5 5l2.500 2.500L5 10" fill="none" stroke="#00006e" strokeWidth="1.5" />
        </svg>
      </button>
      <div className="ml-[5px] flex min-w-0 flex-1 self-stretch">
        {tasks.map((t) => (
          <button
            key={t.text}
            type="button"
            className={`flex max-w-[154px] min-w-0 flex-1 items-center gap-[5px] pl-2 text-[11px] whitespace-nowrap ${
              t.active ? "bg-gradient-to-b from-[#2c2f38] to-[#14151b]" : ""
            }`}
          >
            {t.icon}
            {t.text}
          </button>
        ))}
      </div>
      <button type="button" className="h-4 w-[13px] shrink-0 bg-[#3074dc] text-center text-[11px] leading-4">
        RL
      </button>
      <button
        type="button"
        className={`${ARIAL} ml-[7px] flex h-[21px] w-[90px] shrink-0 flex-col items-center justify-center bg-white font-bold text-[#777]`}
      >
        <span className="text-xs leading-[11px]">nero</span>
        <span className="text-[8px] leading-2">@SEARCH</span>
      </button>
      <button type="button" aria-label="Найти" className="ml-[6px] shrink-0">
        <Icon>
          <rect x=".5" y=".5" width="15" height="15" rx="1" fill="#43b02a" stroke="#8bd676" />
          <path d="M2 8h8M7.500 3.500L12.500 8l-5 4.500" stroke="#fff" strokeWidth="2.5" />
        </Icon>
      </button>
      <button type="button" aria-label="Параметры поиска" className="mx-[3px] flex w-3 shrink-0 justify-center">
        <svg width="7" height="4" viewBox="0 0 7 4">
          <path d="M0 0h7L3.500 4z" fill="#00006e" />
        </svg>
      </button>
      <button type="button" aria-label="Скрытые значки" className="mr-[6px] ml-[5px] shrink-0">
        <svg width="8" height="10" viewBox="0 0 8 10">
          <path d="M6.500 1L2 5l4.500 4" fill="none" stroke="#e6e8ee" strokeWidth="2" />
        </svg>
      </button>
      <div className="flex shrink-0 items-center gap-[2px]">
        <Icon>
          <rect width="16" height="16" rx="1" fill="#ef8a1d" />
          <path d="M5 3v10l7-5z" fill="#222" />
        </Icon>
        <Icon>
          <rect width="16" height="16" rx="2" fill="#d9f3ef" />
          <rect x="1.5" y="1.5" width="13" height="13" rx="2" fill="#119c8c" />
          <path d="M7 3a5 5 0 000 10z" fill="#fff" />
          <path d="M9 3a5 5 0 010 10z" fill="#fff" />
          <path d="M6 6a3 3 0 000 4zM10 6a3 3 0 010 4z" fill="#119c8c" />
        </Icon>
        <Icon>
          <path d="M1 6h2.500L8 1.500v13L3.500 10H1z" fill="#f2f3f5" />
          <path d="M10 5c1.500 2 1.500 4 0 6M12.500 3c2.500 3 2.500 7 0 10" stroke="#dfe2e8" strokeWidth="1.25" />
        </Icon>
        <Icon>
          <path d="M2 1l7 1-1 6-6-2z" fill="#3fc24b" stroke="#1c6e25" />
          <path d="M5 9l6-3 4 4-7 5z" fill="#d9dce2" stroke="#5d6472" />
          <path d="M8 12l4-3" stroke="#444" strokeWidth="1.5" />
        </Icon>
        <Icon>
          <ellipse cx="8" cy="8" rx="5.5" ry="7.5" fill="#1e6fe0" />
          <path d="M5 5l6 6-3 2.500v-11L11 5l-6 6" stroke="#fff" strokeWidth="1.25" />
        </Icon>
      </div>
      <time className="mr-4 ml-[9px] w-6 shrink-0 text-right text-[11px] whitespace-nowrap">0:14</time>
    </footer>
  );
}

export default function App() {
  return (
    <div className={`${UI} flex h-screen flex-col overflow-hidden bg-gradient-to-r from-[#f4f7fc] via-[#fcfdfd] to-[#fdfefe] text-black`}>
      <TitleBar />
      <MenuBar />
      <StandardToolbar />
      <FormatToolbar />
      <FormulaBar />
      <Sheet />
      <SheetTabs />
      <div className="flex h-[21px] shrink-0 items-center bg-[#f4f7fc] text-[11px]">
        <span className="ml-1">Готово</span>
        <span className="mr-24 ml-auto">NUM</span>
      </div>
      <Taskbar />
    </div>
  );
}
